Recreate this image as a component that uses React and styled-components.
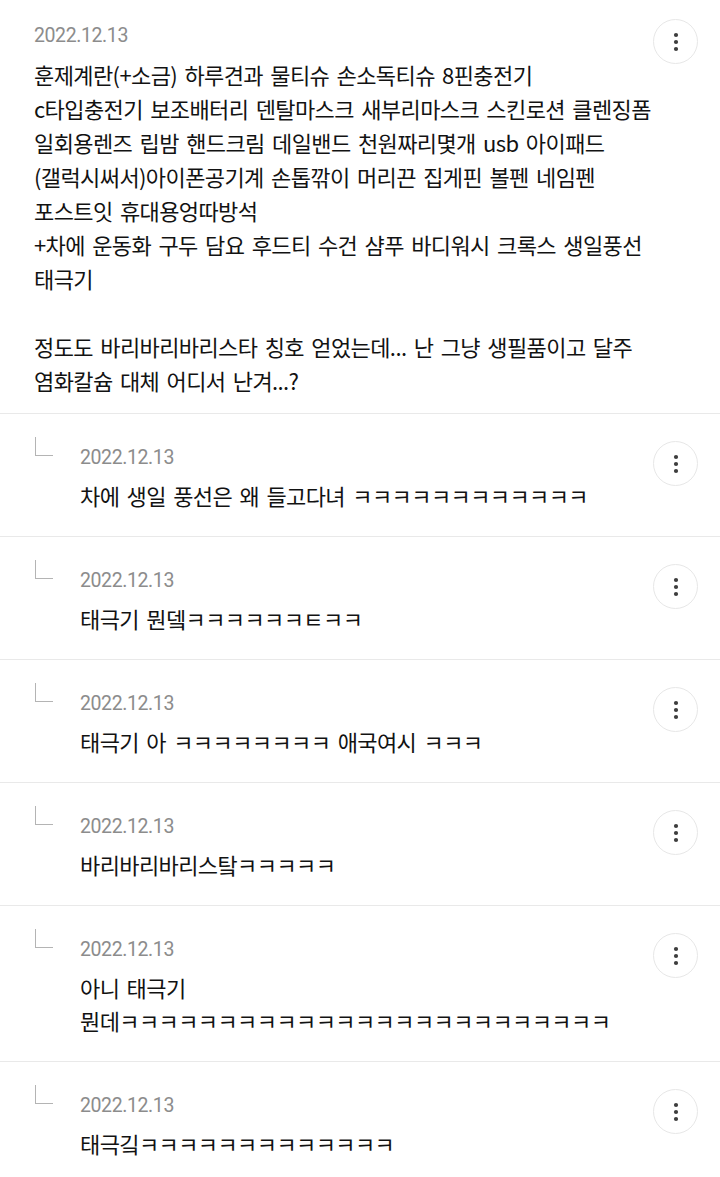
import React from "react";
import styled, { createGlobalStyle } from "styled-components";

const Global = createGlobalStyle`
  html, body { margin: 0; padding: 0; background: #ffffff; }
  body { font-family: "Noto Sans CJK KR", "Noto Sans", sans-serif; -webkit-font-smoothing: antialiased; }
`;

const List = styled.div`
  display: flex;
  flex-direction: column;
  width: 720px;
  background: #fff;
`;

const Item = styled.div`
  display: flex;
  align-items: flex-start;
  padding: ${(p) => (p.$reply ? "31px 22px 24px 35px" : "23px 22px 16px 34px")};
  border-bottom: 1px solid #e9e9e9;
`;

const Corner = styled.div`
  flex: 0 0 auto;
  width: 18px;
  height: 19px;
  margin-top: -8px;
  margin-right: 27px;
  border-left: 1.5px solid #b4b4b4;
  border-bottom: 1.5px solid #b4b4b4;
  box-sizing: border-box;
`;

const Body = styled.div`
  flex: 1 1 auto;
  min-width: 0;
  display: flex;
  flex-direction: column;
`;

const Header = styled.div`
  display: flex;
  align-items: flex-start;
  height: 26px;
`;

const DateText = styled.span`
  font-family: Roboto, "Liberation Sans", sans-serif;
  font-size: 19.5px;
  line-height: 26px;
  letter-spacing: -0.4px;
  color: #8c8c8c;
`;

const MoreButton = styled.button`
  margin: ${(p) => (p.$reply ? "-4px 0 -23px auto" : "-4px 0 -23px auto")};
  width: 45px;
  height: 45px;
  flex: 0 0 auto;
  border-radius: 50%;
  border: 1px solid #e7e7e7;
  background: #fff;
  padding: 0;
  display: flex;
  align-items: center;
  justify-content: center;
  position: relative;
  z-index: 1;
`;

const Text = styled.div`
  margin-top: 8px;
  font-size: 22px;
  line-height: ${(p) => (p.$reply ? "33px" : "34px")};
  letter-spacing: -0.6px;
  word-spacing: 3px;
  color: #121212;
  white-space: pre;
`;

function Dots() {
  return (
    <svg width="6" height="20" viewBox="0 0 6 20">
      <circle cx="3" cy="3" r="2.1" fill="#3d3d3d" />
      <circle cx="3" cy="10" r="2.1" fill="#3d3d3d" />
      <circle cx="3" cy="17" r="2.1" fill="#3d3d3d" />
    </svg>
  );
}

const main = `훈제계란(+소금) 하루견과 물티슈 손소독티슈 8핀충전기
c타입충전기 보조배터리 덴탈마스크 새부리마스크 스킨로션 클렌징폼
일회용렌즈 립밤 핸드크림 데일밴드 천원짜리몇개 usb 아이패드
(갤럭시써서)아이폰공기계 손톱깎이 머리끈 집게핀 볼펜 네임펜
포스트잇 휴대용엉따방석
+차에 운동화 구두 담요 후드티 수건 샴푸 바디워시 크록스 생일풍선
태극기

정도도 바리바리바리스타 칭호 얻었는데... 난 그냥 생필품이고 달주
염화칼슘 대체 어디서 난겨...?`;

const replies = [
  "차에 생일 풍선은 왜 들고다녀 ㅋㅋㅋㅋㅋㅋㅋㅋㅋㅋㅋㅋ",
  "태극기 뭔뎈ㅋㅋㅋㅋㅋㅋㅌㅋㅋ",
  "태극기 아 ㅋㅋㅋㅋㅋㅋㅋㅋ 애국여시 ㅋㅋㅋ",
  "바리바리바리스탘ㅋㅋㅋㅋㅋ",
  "아니 태극기\n뭔데ㅋㅋㅋㅋㅋㅋㅋㅋㅋㅋㅋㅋㅋㅋㅋㅋㅋㅋㅋㅋㅋㅋㅋㅋㅋ",
  "태극깈ㅋㅋㅋㅋㅋㅋㅋㅋㅋㅋㅋㅋㅋ",
];

export default function App() {
  return (
    <>
      <Global />
      <List>
        <Item>
          <Body>
            <Header>
              <DateText>2022.12.13</DateText>
              <MoreButton aria-label="more">
                <Dots />
              </MoreButton>
            </Header>
            <Text>{main}</Text>
          </Body>
        </Item>
        {replies.map((r, i) => (
          <Item $reply key={i}>
            <Corner />
            <Body>
              <Header>
                <DateText>2022.12.13</DateText>
                <MoreButton $reply aria-label="more">
                  <Dots />
                </MoreButton>
              </Header>
              <Text $reply>{r}</Text>
            </Body>
          </Item>
        ))}
      </List>
    </>
  );
}
